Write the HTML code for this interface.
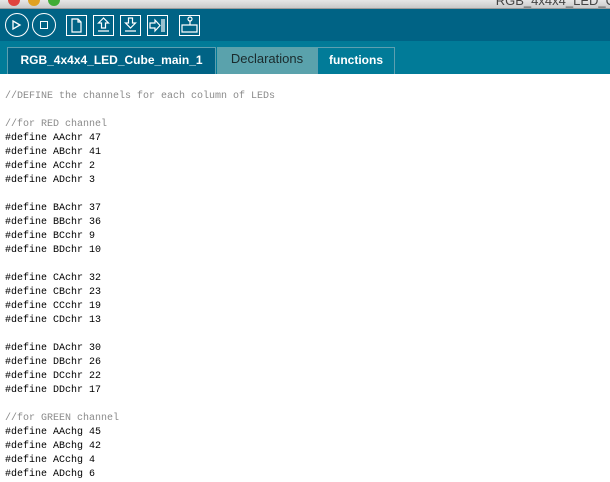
<!DOCTYPE html>
<html><head><style>
body{margin:0;width:610px;height:479px;overflow:hidden;background:#fff;font-family:"Liberation Sans",sans-serif;position:relative}
.title{position:absolute;left:0;top:0;width:610px;height:8px;background:linear-gradient(#e6e6e6,#c9c9c9);border-bottom:1px solid #9a9a9a}
.dot{position:absolute;top:-6px;width:12px;height:12px;border-radius:50%}
.tt{position:absolute;right:-5px;top:-7px;font-size:13px;color:#444}
.tool{position:absolute;left:0;top:9px;width:610px;height:32px;background:#006385}
.tabs{position:absolute;left:0;top:41px;width:610px;height:33px;background:#017b98}
.tab{position:absolute;top:6px;height:27px;font-size:12px;line-height:24px;text-align:center;font-weight:bold}
.b{position:absolute;border:1.5px solid #fff;box-sizing:border-box}
pre{position:absolute;left:5px;top:90px;margin:0;font-family:"Liberation Mono",monospace;font-size:10px;line-height:14px;color:#000}
.c{color:#8a8a8a}
</style></head><body>
<div class="title"><div class="dot" style="left:8px;background:#e0443e"></div><div class="dot" style="left:28px;background:#dfa123"></div><div class="dot" style="left:48px;background:#3fad36"></div><div class="tt">RGB_4x4x4_LED_C</div></div>
<div class="tool">
<div class="b" style="left:5px;top:4px;width:24px;height:24px;border-radius:50%"></div>
<svg style="position:absolute;left:12px;top:11px" width="10" height="10"><path d="M1 1 L8 5 L1 9 Z" fill="none" stroke="#fff" stroke-width="1.3"/></svg>
<div class="b" style="left:32px;top:4px;width:24px;height:24px;border-radius:50%"></div>
<div class="b" style="left:40px;top:12px;width:8px;height:8px;border-width:1.3px"></div>
<div class="b" style="left:66px;top:6px;width:21px;height:21px"></div>
<svg style="position:absolute;left:66px;top:6px" width="21" height="21" fill="none" stroke="#fff" stroke-width="1.2"><path d="M6 4h6l3 3v10H6z M12 4v3h3"/></svg>
<div class="b" style="left:93px;top:6px;width:21px;height:21px"></div>
<svg style="position:absolute;left:93px;top:6px" width="21" height="21" fill="none" stroke="#fff" stroke-width="1.2"><path d="M10.5 3l-5 5h3v5h4V8h3z M5 16h11"/></svg>
<div class="b" style="left:120px;top:6px;width:21px;height:21px"></div>
<svg style="position:absolute;left:120px;top:6px" width="21" height="21" fill="none" stroke="#fff" stroke-width="1.2"><path d="M8.5 3v5h-3l5 5 5-5h-3V3z M5 16h11"/></svg>
<div class="b" style="left:147px;top:6px;width:21px;height:21px"></div>
<svg style="position:absolute;left:147px;top:6px" width="21" height="21" fill="none" stroke="#fff" stroke-width="1.2"><path d="M3 8h5V5l5 5.5-5 5.5v-3H3z M15 4v13 M17 4v13" /></svg>
<div class="b" style="left:179px;top:6px;width:21px;height:21px"></div>
<svg style="position:absolute;left:179px;top:6px" width="21" height="21" fill="none" stroke="#fff" stroke-width="1.2"><circle cx="11" cy="4" r="2"/><path d="M11 6v4 M3 10h15v7H3z"/></svg>
</div>
<div class="tabs">
<div class="tab" style="left:7px;width:209px;background:#006385;color:#fff;border:1px solid #5d9fb0;border-bottom:none;box-sizing:border-box">RGB_4x4x4_LED_Cube_main_1</div>
<div class="tab" style="left:217px;width:100px;background:#5aa2ac;color:#1a2a2c;font-weight:normal;font-size:13px">Declarations</div>
<div class="tab" style="left:317px;width:78px;background:#017b98;color:#fff;border:1px solid #5d9fb0;border-bottom:none;box-sizing:border-box">functions</div>
</div>
<pre><span class="c">//DEFINE the channels for each column of LEDs</span>

<span class="c">//for RED channel</span>
#define AAchr 47
#define ABchr 41
#define ACchr 2
#define ADchr 3

#define BAchr 37
#define BBchr 36
#define BCchr 9
#define BDchr 10

#define CAchr 32
#define CBchr 23
#define CCchr 19
#define CDchr 13

#define DAchr 30
#define DBchr 26
#define DCchr 22
#define DDchr 17

<span class="c">//for GREEN channel</span>
#define AAchg 45
#define ABchg 42
#define ACchg 4
#define ADchg 6</pre>
</body></html>
